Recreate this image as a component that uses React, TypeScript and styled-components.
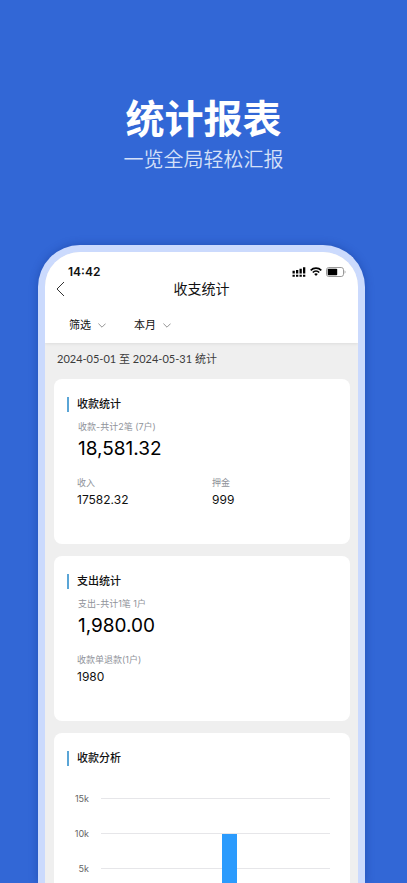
import React from 'react';
import styled, { createGlobalStyle } from 'styled-components';

const GlobalStyle = createGlobalStyle`
  * { box-sizing: border-box; }
  body {
    margin: 0;
    background: #3267d6;
    font-family: Inter, "Noto Sans CJK SC", sans-serif;
    color: #111;
  }
  h1, h2, p, dl, dd { margin: 0; }
  button {
    border: 0;
    padding: 0;
    background: none;
    color: inherit;
    font: inherit;
    cursor: pointer;
  }
`;

const Page = styled.main`
  display: flex;
  flex-direction: column;
  height: 100vh;
  overflow: hidden;
  padding-top: 88px;
  background: #3267d6;
`;

const Hero = styled.header`
  padding-bottom: 71px;
  color: #fff;
  text-align: center;
  font-family: "Noto Sans CJK SC", sans-serif;
`;

const HeroTitle = styled.h1`
  font-size: 39px;
  font-weight: 700;
  line-height: 56px;
`;

const HeroText = styled.p`
  color: #d5e0f8;
  font-size: 20px;
  font-weight: 350;
  line-height: 30px;
`;

const Phone = styled.section`
  display: flex;
  flex: 1;
  flex-direction: column;
  min-height: 0;
  margin: 0 42px 0 38px;
  overflow: hidden;
  border: 7px solid #cbdafd;
  border-bottom: 0;
  border-radius: 42px 42px 0 0;
  background: #efefef;
  box-shadow: 0 0 8px rgba(12, 45, 130, 0.4);
`;

const TopBar = styled.div`
  background: #fff;
  box-shadow: 0 1px 3px rgba(0, 0, 0, 0.08);
`;

const StatusBar = styled.div`
  display: flex;
  align-items: center;
  justify-content: space-between;
  padding: 12px 12px 0 23px;
  font-size: 12px;
  font-weight: 600;
  line-height: 15px;
`;

const StatusIcons = styled.div`
  display: flex;
  align-items: center;
  gap: 4px;

  svg { display: block; }
`;

const NavBar = styled.div`
  display: grid;
  grid-template-columns: 16px 1fr 16px;
  align-items: center;
  height: 20px;
  padding: 0 7px;
`;

const BackButton = styled.button`
  display: flex;
  justify-content: center;
`;

const NavTitle = styled.h2`
  font-size: 14px;
  font-weight: 400;
  line-height: 20px;
  text-align: center;
`;

const Filters = styled.div`
  display: flex;
  gap: 28px;
  padding: 18px 24px 10px;
`;

const FilterButton = styled.button`
  display: flex;
  align-items: center;
  gap: 7px;
  font-size: 11px;
  line-height: 16px;
`;

const Content = styled.div`
  display: flex;
  flex: 1;
  flex-direction: column;
  gap: 12px;
  min-height: 0;
  padding: 8px 8px 0 9px;
`;

const Period = styled.p`
  padding: 0 3px;
  color: #3c3c3c;
  font-family: Lato, "Noto Sans CJK SC", sans-serif;
  font-size: 11px;
  line-height: 16px;
`;

const Card = styled.article<{ $fill?: boolean }>`
  flex: ${({ $fill }) => ($fill ? '1' : '0 0 165px')};
  padding: 17px 20px 0 13px;
  border-radius: ${({ $fill }) => ($fill ? '8px 8px 0 0' : '8px')};
  background: #fff;
`;

const CardTitle = styled.h2`
  display: flex;
  align-items: center;
  gap: 8px;
  font-size: 11px;
  font-weight: 500;
  line-height: 16px;

  &::before {
    content: "";
    width: 2px;
    height: 15px;
    background: #5aa5d6;
  }
`;

const Summary = styled.div`
  padding: 8px 0 0 11px;
`;

const Label = styled.p`
  color: #90939a;
  font-size: 9px;
  line-height: 14px;
`;

const Total = styled.p`
  color: #000;
  font-size: 19px;
  line-height: 30px;
`;

const Figures = styled.dl`
  display: grid;
  grid-template-columns: 135px 1fr;
  padding: 12px 0 0 10px;
`;

const FigureLabel = styled.dt`
  color: #90939a;
  font-size: 9px;
  line-height: 14px;
`;

const FigureValue = styled.dd`
  font-size: 12px;
  line-height: 20px;
`;

const Chart = styled.div`
  position: relative;
  margin-top: 15px;
`;

const GridRow = styled.div`
  display: grid;
  grid-template-columns: 22px 1fr;
  gap: 12px;
  align-items: center;
  height: 35px;
  color: #666;
  font-size: 9px;
  text-align: right;

  &::after {
    content: "";
    height: 1px;
    background: #e6e6e9;
  }
`;

const Plot = styled.div`
  position: absolute;
  inset: 53px 0 -35px 34px;
`;

const Bar = styled.div`
  width: 15px;
  height: 100%;
  margin-left: 53%;
  background: #2b9bfd;
`;

function Signal() {
  return (
    <svg width="14" height="10" viewBox="0 0 14 10" fill="#000" aria-hidden="true">
      <path d="M.5 3.8h2.3v2.8H.5zM4 3h2.3v3.6H4zM7.5 1.8h2.3v4.8H7.5zM11 .2h2.3v6.4H11z" />
      <path d="M.5 7.7h2.3v2H.5zM4 7.7h2.3v2H4zM7.5 7.7h2.3v2H7.5zM11 7.7h2.3v2H11z" />
    </svg>
  );
}

function Wifi() {
  return (
    <svg width="12" height="9" viewBox="0 0 12 9" fill="none" stroke="#000" strokeWidth="1.7" aria-hidden="true">
      <path d="M.7 3.3a7.6 7.6 0 0 1 10.6 0M2.8 5.5a4.6 4.6 0 0 1 6.4 0" />
      <path d="M6 8.9 4.2 7.1a2.6 2.6 0 0 1 3.6 0z" fill="#000" stroke="none" />
    </svg>
  );
}

function Battery() {
  return (
    <svg width="20" height="10" viewBox="0 0 20 10" aria-hidden="true">
      <rect x=".5" y=".5" width="17" height="9" rx="2.3" fill="none" stroke="#999" />
      <rect x="1.7" y="1.8" width="9.5" height="6.4" rx=".8" fill="#000" />
      <path d="M18.6 3.3c1.2.4 1.2 3 0 3.4z" fill="#999" />
    </svg>
  );
}

function BackIcon() {
  return (
    <svg width="9" height="16" viewBox="0 0 9 16" fill="none" stroke="#333" aria-hidden="true">
      <path d="M8 1 1 8l7 7" />
    </svg>
  );
}

function DownIcon() {
  return (
    <svg width="8" height="5" viewBox="0 0 8 5" fill="none" stroke="#888" strokeWidth=".9" aria-hidden="true">
      <path d="m.4.6 3.6 3.6L7.6.6" />
    </svg>
  );
}

type Figure = { label: string; value: string };

function StatCard({ title, note, total, figures }: {
  title: string;
  note: string;
  total: string;
  figures: Figure[];
}) {
  return (
    <Card>
      <CardTitle>{title}</CardTitle>
      <Summary>
        <Label>{note}</Label>
        <Total>{total}</Total>
      </Summary>
      <Figures>
        {figures.map(({ label, value }) => (
          <div key={label}>
            <FigureLabel>{label}</FigureLabel>
            <FigureValue>{value}</FigureValue>
          </div>
        ))}
      </Figures>
    </Card>
  );
}

export default function App() {
  return (
    <Page>
      <GlobalStyle />
      <Hero>
        <HeroTitle>统计报表</HeroTitle>
        <HeroText>一览全局轻松汇报</HeroText>
      </Hero>
      <Phone>
        <TopBar>
          <StatusBar>
            <span>14:42</span>
            <StatusIcons>
              <Signal />
              <Wifi />
              <Battery />
            </StatusIcons>
          </StatusBar>
          <NavBar>
            <BackButton aria-label="返回"><BackIcon /></BackButton>
            <NavTitle>收支统计</NavTitle>
          </NavBar>
          <Filters>
            <FilterButton>筛选<DownIcon /></FilterButton>
            <FilterButton>本月<DownIcon /></FilterButton>
          </Filters>
        </TopBar>
        <Content>
          <Period>2024-05-01 至 2024-05-31 统计</Period>
          <StatCard
            title="收款统计"
            note="收款-共计2笔 (7户)"
            total="18,581.32"
            figures={[{ label: '收入', value: '17582.32' }, { label: '押金', value: '999' }]}
          />
          <StatCard
            title="支出统计"
            note="支出-共计1笔 1户"
            total="1,980.00"
            figures={[{ label: '收款单退款(1户)', value: '1980' }]}
          />
          <Card $fill>
            <CardTitle>收款分析</CardTitle>
            <Chart>
              <GridRow>15k</GridRow>
              <GridRow>10k</GridRow>
              <GridRow>5k</GridRow>
              <Plot><Bar /></Plot>
            </Chart>
          </Card>
        </Content>
      </Phone>
    </Page>
  );
}
